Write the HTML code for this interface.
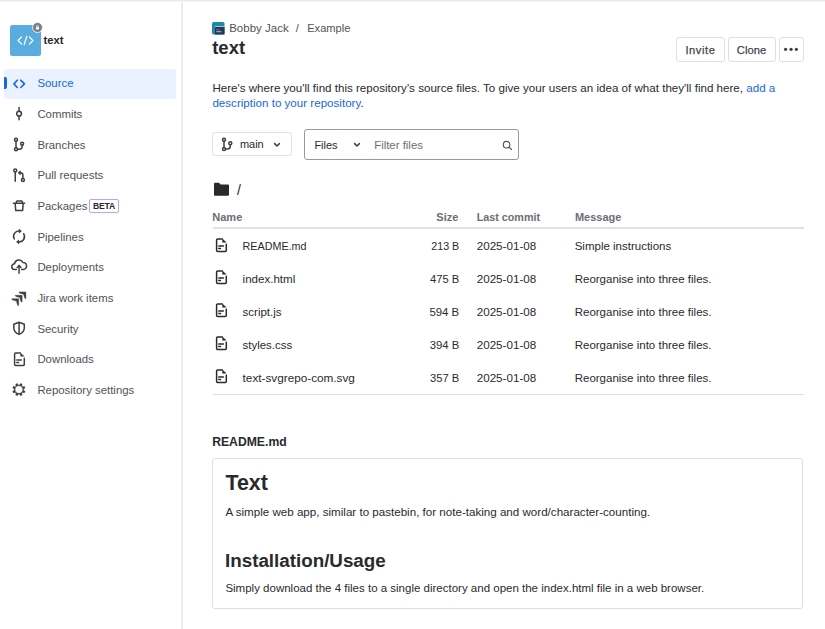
<!DOCTYPE html>
<html><head><meta charset="utf-8"><title>text</title>
<style>
html,body{margin:0;padding:0;background:#fff;width:825px;height:629px;overflow:hidden;position:relative}
body{font-family:"Liberation Sans", sans-serif}
.t{position:absolute;white-space:nowrap;line-height:1;font-family:"Liberation Sans", sans-serif}
svg{overflow:visible}
</style></head><body>
<div style="position:absolute;left:0px;top:0px;width:825px;height:1px;background:#e8e8e8"></div>
<div style="position:absolute;left:0px;top:1px;width:825px;height:1px;background:#f7f7f7"></div>
<div style="position:absolute;left:181px;top:0px;width:2px;height:629px;background:#ededed"></div>
<div style="position:absolute;left:10px;top:25px;width:30.5px;height:30.5px;background:#5aace0;border-radius:2.5px"></div>
<svg style="position:absolute;left:10px;top:25px" width="31" height="31" viewBox="0 0 31 31"><path d="M11.6 11.9 L8.1 15.5 L11.6 19.1 M19.4 11.9 L22.9 15.5 L19.4 19.1 M16.9 11.3 L14.1 19.7" stroke="#fff" stroke-width="1.2" fill="none" stroke-linecap="round" stroke-linejoin="round"/></svg>
<svg style="position:absolute;left:31.25px;top:21.2px" width="13" height="13" viewBox="0 0 13 13"><circle cx="6.5" cy="6.5" r="5.0" fill="#7b7e86" stroke="#fff" stroke-width="0.8"/><rect x="5" y="6.1" width="3" height="2.3" rx="0.3" fill="#fff"/><path d="M5.6 6.1 V5.4 a0.9 0.9 0 0 1 1.8 0 V6.1" stroke="#fff" stroke-width="0.7" fill="none"/></svg>
<div class="t" style="left:43.50px;top:35.00px;font-size:11.3px;font-weight:700;color:#292a2e;letter-spacing:0px;">text</div>
<div style="position:absolute;left:4px;top:69px;width:171.5px;height:29.5px;background:#e9f2fe;border-radius:2.5px"></div>
<div style="position:absolute;left:4px;top:77px;width:3px;height:12px;background:#1868db;border-radius:0 2px 2px 0"></div>
<svg style="position:absolute;left:8px;top:71px" width="24" height="24" viewBox="0 0 24 24"><path d="M9.3 9.2 L5.9 12.85 L9.3 16.5 M12.7 9.2 L16.5 12.85 L12.7 16.5" stroke="#1868db" stroke-width="1.6" fill="none" stroke-linecap="round" stroke-linejoin="round"/></svg>
<div class="t" style="left:37.40px;top:78.00px;font-size:11.4px;font-weight:400;color:#1868db;letter-spacing:0px;">Source</div>
<div class="t" style="left:37.40px;top:109.00px;font-size:11.4px;font-weight:400;color:#505258;letter-spacing:0px;">Commits</div>
<div class="t" style="left:37.40px;top:140.00px;font-size:11.4px;font-weight:400;color:#505258;letter-spacing:0px;">Branches</div>
<div class="t" style="left:37.40px;top:170.00px;font-size:11.4px;font-weight:400;color:#505258;letter-spacing:0px;">Pull requests</div>
<div class="t" style="left:37.40px;top:201.00px;font-size:11.4px;font-weight:400;color:#505258;letter-spacing:0px;">Packages</div>
<div class="t" style="left:37.40px;top:232.00px;font-size:11.4px;font-weight:400;color:#505258;letter-spacing:0px;">Pipelines</div>
<div class="t" style="left:37.40px;top:262.00px;font-size:11.4px;font-weight:400;color:#505258;letter-spacing:0px;">Deployments</div>
<div class="t" style="left:37.40px;top:293.00px;font-size:11.4px;font-weight:400;color:#505258;letter-spacing:0px;">Jira work items</div>
<div class="t" style="left:37.40px;top:324.00px;font-size:11.4px;font-weight:400;color:#505258;letter-spacing:0px;">Security</div>
<div class="t" style="left:37.40px;top:354.00px;font-size:11.4px;font-weight:400;color:#505258;letter-spacing:0px;">Downloads</div>
<div class="t" style="left:37.40px;top:385.00px;font-size:11.4px;font-weight:400;color:#505258;letter-spacing:0px;">Repository settings</div>
<svg style="position:absolute;left:8px;top:104px" width="24" height="24" viewBox="0 0 24 24"><path d="M11.07 3.6 V7.3 M11.07 12.1 V15.8" stroke="#3d3f45" stroke-width="1.5" fill="none" stroke-linecap="round" stroke-linejoin="round"/><circle cx="11.07" cy="9.7" r="2.35" stroke="#3d3f45" stroke-width="1.5" fill="none" stroke-linecap="round" stroke-linejoin="round"/></svg>
<svg style="position:absolute;left:8px;top:134px" width="24" height="24" viewBox="0 0 24 24"><circle cx="8" cy="5.7" r="1.5" stroke="#3d3f45" stroke-width="1.5" fill="none" stroke-linecap="round" stroke-linejoin="round"/><circle cx="8" cy="15.3" r="1.5" stroke="#3d3f45" stroke-width="1.5" fill="none" stroke-linecap="round" stroke-linejoin="round"/><circle cx="14.1" cy="9.7" r="1.5" stroke="#3d3f45" stroke-width="1.5" fill="none" stroke-linecap="round" stroke-linejoin="round"/><path d="M8 7.2 V13.8 M9.5 15.3 H11.4 a2.7 2.7 0 0 0 2.7 -2.7 V11.2" stroke="#3d3f45" stroke-width="1.5" fill="none" stroke-linecap="round" stroke-linejoin="round"/></svg>
<svg style="position:absolute;left:8px;top:164px" width="24" height="24" viewBox="0 0 24 24"><circle cx="7.25" cy="6.5" r="1.5" stroke="#3d3f45" stroke-width="1.5" fill="none" stroke-linecap="round" stroke-linejoin="round"/><path d="M7.25 8 V17.3" stroke="#3d3f45" stroke-width="1.5" fill="none" stroke-linecap="round" stroke-linejoin="round"/><circle cx="14.9" cy="16" r="1.5" stroke="#3d3f45" stroke-width="1.5" fill="none" stroke-linecap="round" stroke-linejoin="round"/><path d="M14.9 14.5 V11.3 a2.5 2.5 0 0 0 -2.5 -2.5 H11.6" stroke="#3d3f45" stroke-width="1.5" fill="none" stroke-linecap="round" stroke-linejoin="round"/><path d="M10.2 8.8 L12.3 6.9 V10.7 Z" fill="#3d3f45" stroke="#3d3f45" stroke-width="0.8" stroke-linejoin="round"/></svg>
<svg style="position:absolute;left:8px;top:194px" width="24" height="24" viewBox="0 0 24 24"><path d="M5.4 9.35 H16.6 M7.2 9.6 L7.7 16.6 H14.6 L15.2 9.6 M8.0 9.35 L8.6 7.3 Q8.75 6.9 9.15 6.9 H13.6 Q14.0 6.9 14.15 7.3 L14.75 9.35" stroke="#3d3f45" stroke-width="1.5" fill="none" stroke-linecap="round" stroke-linejoin="round"/></svg>
<svg style="position:absolute;left:8px;top:225px" width="24" height="24" viewBox="0 0 24 24"><path d="M6.3 14.0 A5.3 5.3 0 0 1 11.6 6.1" stroke="#3d3f45" stroke-width="1.5" fill="none" stroke-linecap="round" stroke-linejoin="round"/><path d="M15.6 8.7 A5.3 5.3 0 0 1 10.4 16.9" stroke="#3d3f45" stroke-width="1.5" fill="none" stroke-linecap="round" stroke-linejoin="round"/><path d="M11.3 4.4 L13.3 6.1 L11.3 7.8 Z" fill="#3d3f45" stroke="#3d3f45" stroke-width="1" stroke-linejoin="round"/><path d="M10.7 15.2 L8.7 16.9 L10.7 18.6 Z" fill="#3d3f45" stroke="#3d3f45" stroke-width="1" stroke-linejoin="round"/></svg>
<svg style="position:absolute;left:8px;top:255px" width="24" height="24" viewBox="0 0 24 24"><path d="M8.4 14.5 H6.8 a2.9 2.9 0 0 1 -0.2 -5.8 a4.4 4.4 0 0 1 8.3 -1.2 a3.3 3.3 0 0 1 0.4 7 H13.6" stroke="#3d3f45" stroke-width="1.5" fill="none" stroke-linecap="round" stroke-linejoin="round"/><path d="M11.07 18.3 V11" stroke="#3d3f45" stroke-width="1.5" fill="none" stroke-linecap="round" stroke-linejoin="round"/><path d="M9.2 12.4 L11.07 10.4 L12.9 12.4" stroke="#3d3f45" stroke-width="1.5" fill="none" stroke-linecap="round" stroke-linejoin="round"/></svg>
<svg style="position:absolute;left:8px;top:286px" width="24" height="24" viewBox="0 0 24 24"><path d="M10.90 5.90 H17.90 V12.80 L16.65 12.10 L15.60 8.20 L11.70 7.15 Z M7.10 9.25 H14.10 V16.15 L12.85 15.45 L11.80 11.55 L7.90 10.50 Z M3.70 12.80 H10.70 V19.70 L9.45 19.00 L8.40 15.10 L4.50 14.05 Z" fill="#3d3f45" stroke="#3d3f45" stroke-width="0.4" stroke-linejoin="round"/></svg>
<svg style="position:absolute;left:8px;top:316px" width="24" height="24" viewBox="0 0 24 24"><path d="M11.07 6.3 L16.3 8.3 V11.8 C16.3 14.8 14.2 17.3 11.07 18.4 C7.9 17.3 5.8 14.8 5.8 11.8 V8.3 Z M11.07 6.3 V18.4" stroke="#3d3f45" stroke-width="1.5" fill="none" stroke-linecap="round" stroke-linejoin="round"/></svg>
<svg style="position:absolute;left:8px;top:347px" width="24" height="24" viewBox="0 0 24 24"><path d="M12.3 5.9 H7.6 a1 1 0 0 0 -1 1 V17.4 a1 1 0 0 0 1 1 H15.3 a1 1 0 0 0 1 -1 V11.2" stroke="#3d3f45" stroke-width="1.5" fill="none" stroke-linecap="round" stroke-linejoin="round"/><path d="M12.3 5.6 L16.6 9.6 H12.3 Z" fill="#3d3f45"/><path d="M8.8 13 H13.3 M8.8 15.4 H10.5" stroke="#3d3f45" stroke-width="1.5" fill="none" stroke-linecap="round" stroke-linejoin="round"/></svg>
<svg style="position:absolute;left:8px;top:378px" width="24" height="24" viewBox="0 0 24 24"><path d="M15.61 12.18 L17.11 13.14 L16.38 14.91 L14.64 14.52 L13.82 15.34 L14.21 17.08 L12.44 17.81 L11.48 16.31 L10.32 16.31 L9.36 17.81 L7.59 17.08 L7.98 15.34 L7.16 14.52 L5.42 14.91 L4.69 13.14 L6.19 12.18 L6.19 11.02 L4.69 10.06 L5.42 8.29 L7.16 8.68 L7.98 7.86 L7.59 6.12 L9.36 5.39 L10.32 6.89 L11.48 6.89 L12.44 5.39 L14.21 6.12 L13.82 7.86 L14.64 8.68 L16.38 8.29 L17.11 10.06 L15.61 11.02 Z M14.65 11.6 A3.75 3.75 0 1 0 7.15 11.6 A3.75 3.75 0 1 0 14.65 11.6 Z" fill="#3d3f45" fill-rule="evenodd" stroke="#3d3f45" stroke-width="0.3" stroke-linejoin="round"/></svg>
<div style="position:absolute;left:89px;top:199px;width:30px;height:13.7px;box-sizing:border-box;border:1px solid #d09cf5;border-radius:2px"></div>
<div class="t" style="left:93.00px;top:202.00px;font-size:8.6px;font-weight:700;color:#292a2e;letter-spacing:-0.2px;">BETA</div>
<svg style="position:absolute;left:211.8px;top:21.8px" width="12.5" height="12.5" viewBox="0 0 12.5 12.5"><rect x="0" y="0" width="12.5" height="12.5" rx="1.5" fill="#1d8aa6"/><rect x="3" y="5" width="9.5" height="7.5" fill="#253858"/><rect x="4.3" y="7.2" width="3" height="1" fill="#e55"/><rect x="4.3" y="9.2" width="5" height="1" fill="#8cf"/><rect x="3" y="4.2" width="9.5" height="0.8" fill="#fff" opacity="0.7"/></svg>
<div class="t" style="left:229.20px;top:23.00px;font-size:11.5px;font-weight:400;color:#505258;letter-spacing:0px;">Bobby Jack</div>
<div class="t" style="left:295.70px;top:23.00px;font-size:11.2px;font-weight:400;color:#505258;letter-spacing:0px;">/</div>
<div class="t" style="left:307.20px;top:23.00px;font-size:11.1px;font-weight:400;color:#505258;letter-spacing:0px;">Example</div>
<div class="t" style="left:212.20px;top:39.00px;font-size:18.5px;font-weight:700;color:#292a2e;letter-spacing:0px;">text</div>
<div style="position:absolute;left:676.2px;top:37px;width:48.5px;height:24.6px;box-sizing:border-box;border:1px solid #dddee1;border-radius:3px;background:#fff"></div>
<div class="t" style="left:685.40px;top:45.00px;font-size:11.2px;font-weight:400;color:#44464c;letter-spacing:0.55px;-webkit-text-stroke:0.25px #44464c;">Invite</div>
<div style="position:absolute;left:727.6px;top:37px;width:48.2px;height:24.6px;box-sizing:border-box;border:1px solid #dddee1;border-radius:3px;background:#fff"></div>
<div class="t" style="left:736.80px;top:45.00px;font-size:11.2px;font-weight:400;color:#44464c;letter-spacing:0.05px;-webkit-text-stroke:0.25px #44464c;">Clone</div>
<div style="position:absolute;left:779.2px;top:37px;width:24.4px;height:24.6px;box-sizing:border-box;border:1px solid #dddee1;border-radius:3px;background:#fff"></div>
<svg style="position:absolute;left:779.2px;top:37px" width="24.4" height="24.6" viewBox="0 0 24.4 24.6"><circle cx="6.6" cy="12.35" r="1.6" fill="#3d3f45"/><circle cx="12.05" cy="12.35" r="1.6" fill="#3d3f45"/><circle cx="17.4" cy="12.35" r="1.6" fill="#3d3f45"/></svg>
<div class="t" style="left:212.40px;top:82.00px;font-size:11.6px;font-weight:400;color:#292a2e;letter-spacing:0px;">Here's where you'll find this repository's source files. To give your users an idea of what they'll find here, <span style="color:#1868db">add a</span></div>
<div class="t" style="left:212.40px;top:97.00px;font-size:11.6px;font-weight:400;color:#292a2e;letter-spacing:0px;"><span style="color:#1868db">description to your repository</span>.</div>
<div style="position:absolute;left:212.4px;top:132.4px;width:79.3px;height:24px;box-sizing:border-box;border:1px solid #dddee1;border-radius:3px"></div>
<svg style="position:absolute;left:216px;top:132.4px" width="24" height="24" viewBox="0 0 24 24"><circle cx="8" cy="7.7" r="1.5" stroke="#3d3f45" stroke-width="1.5" fill="none" stroke-linecap="round" stroke-linejoin="round"/><circle cx="8" cy="17" r="1.5" stroke="#3d3f45" stroke-width="1.5" fill="none" stroke-linecap="round" stroke-linejoin="round"/><circle cx="14.3" cy="11.3" r="1.5" stroke="#3d3f45" stroke-width="1.5" fill="none" stroke-linecap="round" stroke-linejoin="round"/><path d="M8 9.2 V15.5 M9.5 17 H11.6 a2.7 2.7 0 0 0 2.7 -2.7 V12.8" stroke="#3d3f45" stroke-width="1.5" fill="none" stroke-linecap="round" stroke-linejoin="round"/></svg>
<div class="t" style="left:239.90px;top:139.00px;font-size:11px;font-weight:400;color:#292a2e;letter-spacing:0px;">main</div>
<svg style="position:absolute;left:270px;top:138px" width="14" height="14" viewBox="0 0 14 14"><path d="M4.6 5.6 L7 8 L9.4 5.6" stroke="#3d3f45" stroke-width="1.5" fill="none" stroke-linecap="round" stroke-linejoin="round"/></svg>
<div style="position:absolute;left:304px;top:129px;width:215px;height:31px;box-sizing:border-box;border:1px solid #979aa1;border-radius:3px"></div>
<div class="t" style="left:314.40px;top:140.00px;font-size:11px;font-weight:400;color:#292a2e;letter-spacing:0px;">Files</div>
<svg style="position:absolute;left:350px;top:137.5px" width="14" height="14" viewBox="0 0 14 14"><path d="M4.6 5.6 L7 8 L9.4 5.6" stroke="#3d3f45" stroke-width="1.5" fill="none" stroke-linecap="round" stroke-linejoin="round"/></svg>
<div class="t" style="left:374.20px;top:140.00px;font-size:11.4px;font-weight:400;color:#6b6e76;letter-spacing:0px;">Filter files</div>
<svg style="position:absolute;left:500px;top:138px" width="14" height="14" viewBox="0 0 14 14"><circle cx="6.6" cy="6.7" r="3.3" stroke="#505258" stroke-width="1.1" fill="none"/><path d="M9.1 9.2 L11.5 11.5" stroke="#505258" stroke-width="1.1" stroke-linecap="round"/></svg>
<svg style="position:absolute;left:213px;top:181px" width="17" height="16" viewBox="0 0 17 16"><path d="M1 2.8 a1 1 0 0 1 1 -1 H6 L7.6 3.4 H15 a1 1 0 0 1 1 1 V13.7 a1 1 0 0 1 -1 1 H2 a1 1 0 0 1 -1 -1 Z" fill="#292a2e"/></svg>
<div class="t" style="left:236.90px;top:183.00px;font-size:14px;font-weight:400;color:#292a2e;letter-spacing:0px;">/</div>
<div class="t" style="left:212.30px;top:212.00px;font-size:11px;font-weight:700;color:#6b6e76;letter-spacing:0px;">Name</div>
<div class="t" style="right:366.70px;top:212.00px;font-size:11px;font-weight:700;color:#6b6e76;letter-spacing:0px;">Size</div>
<div class="t" style="left:476.70px;top:212.00px;font-size:10.75px;font-weight:700;color:#6b6e76;letter-spacing:0px;">Last commit</div>
<div class="t" style="left:574.90px;top:212.00px;font-size:11px;font-weight:700;color:#6b6e76;letter-spacing:0px;">Message</div>
<div style="position:absolute;left:212.5px;top:227.3px;width:591px;height:2px;background:#dfe1e6"></div>
<svg style="position:absolute;left:210px;top:232.5px" width="24" height="24" viewBox="0 0 24 24"><path d="M12.3 5.9 H7.6 a1 1 0 0 0 -1 1 V17.4 a1 1 0 0 0 1 1 H15.3 a1 1 0 0 0 1 -1 V11.2" stroke="#292a2e" stroke-width="1.5" fill="none" stroke-linecap="round" stroke-linejoin="round"/><path d="M12.3 5.6 L16.6 9.6 H12.3 Z" fill="#292a2e"/><path d="M8.8 13 H13.3 M8.8 15.4 H10.5" stroke="#292a2e" stroke-width="1.5" fill="none" stroke-linecap="round" stroke-linejoin="round"/></svg>
<div class="t" style="left:242.60px;top:241.00px;font-size:10.75px;font-weight:400;color:#292a2e;letter-spacing:0px;">README.md</div>
<div class="t" style="right:365.80px;top:241.00px;font-size:10.7px;font-weight:400;color:#292a2e;letter-spacing:0px;">213 B</div>
<div class="t" style="left:476.70px;top:240.00px;font-size:11.65px;font-weight:400;color:#292a2e;letter-spacing:0px;">2025-01-08</div>
<div class="t" style="left:574.70px;top:241.00px;font-size:11.5px;font-weight:400;color:#292a2e;letter-spacing:0px;">Simple instructions</div>
<svg style="position:absolute;left:210px;top:265.45px" width="24" height="24" viewBox="0 0 24 24"><path d="M12.3 5.9 H7.6 a1 1 0 0 0 -1 1 V17.4 a1 1 0 0 0 1 1 H15.3 a1 1 0 0 0 1 -1 V11.2" stroke="#292a2e" stroke-width="1.5" fill="none" stroke-linecap="round" stroke-linejoin="round"/><path d="M12.3 5.6 L16.6 9.6 H12.3 Z" fill="#292a2e"/><path d="M8.8 13 H13.3 M8.8 15.4 H10.5" stroke="#292a2e" stroke-width="1.5" fill="none" stroke-linecap="round" stroke-linejoin="round"/></svg>
<div class="t" style="left:242.60px;top:274.00px;font-size:11.55px;font-weight:400;color:#292a2e;letter-spacing:0px;">index.html</div>
<div class="t" style="right:365.80px;top:274.00px;font-size:11.2px;font-weight:400;color:#292a2e;letter-spacing:0px;">475 B</div>
<div class="t" style="left:476.70px;top:273.00px;font-size:11.65px;font-weight:400;color:#292a2e;letter-spacing:0px;">2025-01-08</div>
<div class="t" style="left:574.70px;top:274.00px;font-size:11.5px;font-weight:400;color:#292a2e;letter-spacing:0px;">Reorganise into three files.</div>
<svg style="position:absolute;left:210px;top:298.4px" width="24" height="24" viewBox="0 0 24 24"><path d="M12.3 5.9 H7.6 a1 1 0 0 0 -1 1 V17.4 a1 1 0 0 0 1 1 H15.3 a1 1 0 0 0 1 -1 V11.2" stroke="#292a2e" stroke-width="1.5" fill="none" stroke-linecap="round" stroke-linejoin="round"/><path d="M12.3 5.6 L16.6 9.6 H12.3 Z" fill="#292a2e"/><path d="M8.8 13 H13.3 M8.8 15.4 H10.5" stroke="#292a2e" stroke-width="1.5" fill="none" stroke-linecap="round" stroke-linejoin="round"/></svg>
<div class="t" style="left:242.60px;top:307.00px;font-size:11.5px;font-weight:400;color:#292a2e;letter-spacing:0px;">script.js</div>
<div class="t" style="right:365.80px;top:307.00px;font-size:11.4px;font-weight:400;color:#292a2e;letter-spacing:0px;">594 B</div>
<div class="t" style="left:476.70px;top:306.00px;font-size:11.65px;font-weight:400;color:#292a2e;letter-spacing:0px;">2025-01-08</div>
<div class="t" style="left:574.70px;top:307.00px;font-size:11.5px;font-weight:400;color:#292a2e;letter-spacing:0px;">Reorganise into three files.</div>
<svg style="position:absolute;left:210px;top:331.35px" width="24" height="24" viewBox="0 0 24 24"><path d="M12.3 5.9 H7.6 a1 1 0 0 0 -1 1 V17.4 a1 1 0 0 0 1 1 H15.3 a1 1 0 0 0 1 -1 V11.2" stroke="#292a2e" stroke-width="1.5" fill="none" stroke-linecap="round" stroke-linejoin="round"/><path d="M12.3 5.6 L16.6 9.6 H12.3 Z" fill="#292a2e"/><path d="M8.8 13 H13.3 M8.8 15.4 H10.5" stroke="#292a2e" stroke-width="1.5" fill="none" stroke-linecap="round" stroke-linejoin="round"/></svg>
<div class="t" style="left:242.60px;top:340.00px;font-size:11.45px;font-weight:400;color:#292a2e;letter-spacing:0px;">styles.css</div>
<div class="t" style="right:365.80px;top:340.00px;font-size:11.3px;font-weight:400;color:#292a2e;letter-spacing:0px;">394 B</div>
<div class="t" style="left:476.70px;top:339.00px;font-size:11.65px;font-weight:400;color:#292a2e;letter-spacing:0px;">2025-01-08</div>
<div class="t" style="left:574.70px;top:340.00px;font-size:11.5px;font-weight:400;color:#292a2e;letter-spacing:0px;">Reorganise into three files.</div>
<svg style="position:absolute;left:210px;top:364.3px" width="24" height="24" viewBox="0 0 24 24"><path d="M12.3 5.9 H7.6 a1 1 0 0 0 -1 1 V17.4 a1 1 0 0 0 1 1 H15.3 a1 1 0 0 0 1 -1 V11.2" stroke="#292a2e" stroke-width="1.5" fill="none" stroke-linecap="round" stroke-linejoin="round"/><path d="M12.3 5.6 L16.6 9.6 H12.3 Z" fill="#292a2e"/><path d="M8.8 13 H13.3 M8.8 15.4 H10.5" stroke="#292a2e" stroke-width="1.5" fill="none" stroke-linecap="round" stroke-linejoin="round"/></svg>
<div class="t" style="left:242.60px;top:372.00px;font-size:11.75px;font-weight:400;color:#292a2e;letter-spacing:0px;">text-svgrepo-com.svg</div>
<div class="t" style="right:365.80px;top:373.00px;font-size:11.2px;font-weight:400;color:#292a2e;letter-spacing:0px;">357 B</div>
<div class="t" style="left:476.70px;top:372.00px;font-size:11.65px;font-weight:400;color:#292a2e;letter-spacing:0px;">2025-01-08</div>
<div class="t" style="left:574.70px;top:373.00px;font-size:11.5px;font-weight:400;color:#292a2e;letter-spacing:0px;">Reorganise into three files.</div>
<div style="position:absolute;left:212.5px;top:394px;width:591px;height:1px;background:#dcdde0"></div>
<div class="t" style="left:212.20px;top:436.00px;font-size:12.2px;font-weight:700;color:#292a2e;letter-spacing:0px;">README.md</div>
<div style="position:absolute;left:212.3px;top:457.6px;width:591.2px;height:151px;box-sizing:border-box;border:1px solid #dddee1;border-radius:3px"></div>
<div class="t" style="left:225.50px;top:473.00px;font-size:21.4px;font-weight:700;color:#292a2e;letter-spacing:0px;">Text</div>
<div class="t" style="left:225.40px;top:506.00px;font-size:11.6px;font-weight:400;color:#292a2e;letter-spacing:0px;">A simple web app, similar to pastebin, for note-taking and word/character-counting.</div>
<div class="t" style="left:225.00px;top:552.00px;font-size:18.8px;font-weight:700;color:#292a2e;letter-spacing:0px;">Installation/Usage</div>
<div class="t" style="left:225.40px;top:583.00px;font-size:11.5px;font-weight:400;color:#292a2e;letter-spacing:0px;">Simply download the 4 files to a single directory and open the index.html file in a web browser.</div>
</body></html>
